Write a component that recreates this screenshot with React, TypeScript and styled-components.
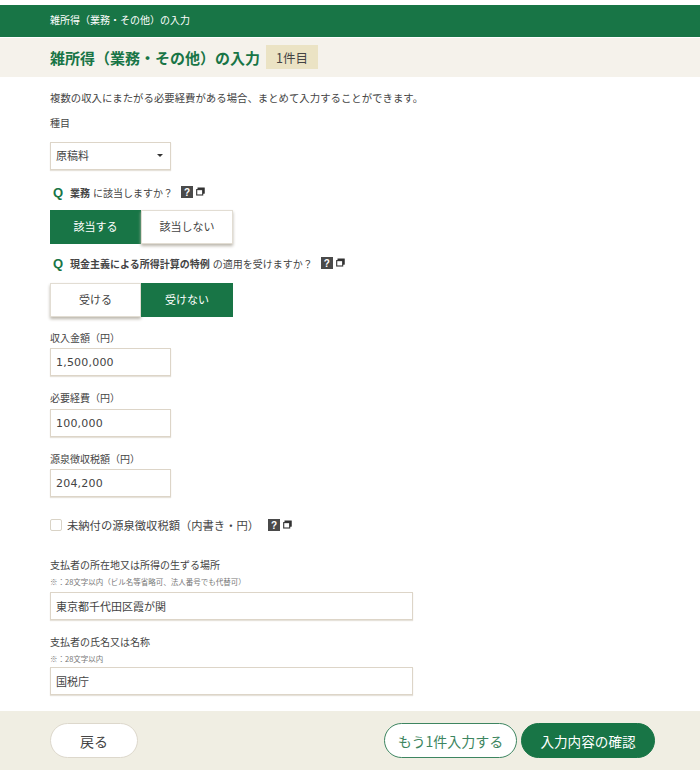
import React from "react";
import styled, { createGlobalStyle } from "styled-components";

const Global = createGlobalStyle`
  html, body { margin: 0; padding: 0; background: #fff; }
  body {
    font-family: "Noto Sans CJK JP", "Liberation Sans", sans-serif;
    color: #444;
    font-size: 12px;
  }
`;

const Page = styled.div`
  width: 700px;
  height: 772px;
  overflow: hidden;
  display: flex;
  flex-direction: column;
  padding-top: 5px;
  box-sizing: border-box;
`;
const TopBar = styled.header`
  background: #187546;
  color: #fff;
  height: 32px;
  box-sizing: border-box;
  display: flex;
  align-items: center;
  padding: 0 0 3px 50px;
  font-size: 10px;
  flex: none;
`;
const TitleBar = styled.div`
  background: #f5f2eb;
  height: 39px;
  margin-top: 1px;
  display: flex;
  align-items: center;
  padding: 0 0 1px 50px;
  box-sizing: border-box;
  gap: 6px;
  flex: none;
`;
const Title = styled.h1`
  margin: 0;
  font-size: 15px;
  font-weight: 700;
  color: #187546;
`;
const Count = styled.span`
  background: #ebe3c4;
  width: 52px;
  height: 24px;
  display: flex;
  align-items: center;
  justify-content: center;
  font-size: 12.5px;
  color: #444;
`;
const Main = styled.main`
  flex: 1;
  padding: 13px 50px 0;
  display: flex;
  flex-direction: column;
  align-items: flex-start;
`;
const Intro = styled.p`
  margin: 0;
  font-size: 10.4px;
  line-height: 15px;
`;
const Text = styled.p`
  margin: 10px 0 0;
  font-size: 10px;
  line-height: 15px;
`;
const SelectBox = styled.div`
  margin-top: 12px;
  width: 121px;
  height: 28px;
  box-sizing: border-box;
  border: 1px solid #ddd5c8;
  box-shadow: 0 1px 1px #e6e2da;
  display: flex;
  align-items: center;
  justify-content: space-between;
  padding: 0 7px 2px 5px;
  font-size: 11px;
`;
const Caret = styled.span`
  width: 0;
  height: 0;
  border-left: 3px solid transparent;
  border-right: 3px solid transparent;
  border-top: 3px solid #333;
`;
const Question = styled.div<{ $mt: number }>`
  margin-top: ${(p) => p.$mt}px;
  padding-left: 3px;
  display: flex;
  align-items: center;
  height: 16px;
  font-size: 10px;
`;
const QMark = styled.span`
  font-family: "Liberation Sans", sans-serif;
  font-weight: 700;
  font-size: 13px;
  color: #187546;
  width: 17px;
`;
const Strong = styled.b`
  font-weight: 700;
  margin-right: 3px;
`;
const Help = styled.span<{ $ml: number }>`
  margin-left: ${(p) => p.$ml}px;
  width: 12px;
  height: 12px;
  background: #4a4a4a;
  color: #fff;
  display: inline-flex;
  align-items: center;
  justify-content: center;
  font-family: "Liberation Sans", sans-serif;
  font-weight: 700;
  font-size: 10px;
`;
const WindowSvg = styled.svg`
  margin: -2px 0 0 3px;
`;
const WindowIcon = () => (
  <WindowSvg width="9" height="9" viewBox="0 0 9 9">
    <rect x="2" y="1" width="6.2" height="5.2" fill="#333" stroke="#333" strokeWidth="1" />
    <rect x="0.7" y="2.6" width="6" height="5.4" fill="#fff" stroke="#333" strokeWidth="1.1" />
  </WindowSvg>
);
const Toggle = styled.div<{ $mt: number }>`
  margin-top: ${(p) => p.$mt}px;
  display: grid;
  grid-template-columns: 91px 92px;
  width: 183px;
  height: 34px;
`;
const ToggleBtn = styled.div<{ $on?: boolean }>`
  display: flex;
  align-items: center;
  justify-content: center;
  font-size: 11px;
  box-sizing: border-box;
  padding-bottom: 2px;
  background: ${(p) => (p.$on ? "#187546" : "#fff")};
  color: ${(p) => (p.$on ? "#fff" : "#444")};
  ${(p) => (p.$on ? "" : "border: 1px solid #e2ddd3; box-shadow: 0 2px 3px #bbb6ac;")}
`;
const Field = styled.div<{ $mt: number }>`
  margin-top: ${(p) => p.$mt}px;
`;
const Label = styled.div`
  font-size: 10px;
  line-height: 15px;
`;
const Note = styled.div`
  font-size: 7.5px;
  line-height: 10px;
  margin-top: 5px;
  color: #777;
`;
const Input = styled.div<{ $w: number; $mt: number }>`
  margin-top: ${(p) => p.$mt}px;
  width: ${(p) => p.$w}px;
  height: 28px;
  box-sizing: border-box;
  border: 1px solid #ddd5c8;
  box-shadow: 0 1px 1px #e6e2da;
  display: flex;
  align-items: center;
  padding-left: 5px;
  font-size: 11px;
`;
const Num = styled.span`
  font-family: "DejaVu Sans", sans-serif;
  font-size: 11px;
  letter-spacing: 0.2px;
`;
const CheckRow = styled.div`
  margin-top: 20px;
  display: flex;
  align-items: center;
  height: 16px;
  font-size: 11.3px;
`;
const Check = styled.span`
  width: 12px;
  height: 12px;
  box-sizing: border-box;
  border: 1px solid #d9d3c6;
  border-radius: 2px;
  margin-right: 5px;
`;
const Footer = styled.footer`
  background: #f0eee3;
  height: 59px;
  margin-bottom: 2px;
  flex: none;
  display: flex;
  align-items: center;
  padding: 0 45px 0 50px;
`;
const Pill = styled.div<{ $w: number; $kind: "plain" | "outline" | "solid" }>`
  width: ${(p) => p.$w}px;
  height: 35px;
  border-radius: 18px;
  box-sizing: border-box;
  display: flex;
  align-items: center;
  justify-content: center;
  font-size: ${(p) => (p.$kind === "solid" ? 13.6 : 14)}px;
  background: ${(p) => (p.$kind === "solid" ? "#187546" : "#fff")};
  color: ${(p) => (p.$kind === "solid" ? "#fff" : p.$kind === "outline" ? "#3d8560" : "#444")};
  border: 1px solid ${(p) => (p.$kind === "solid" ? "#187546" : p.$kind === "outline" ? "#3d8560" : "#ddd8cc")};
`;
const Spacer = styled.div`
  flex: 1;
`;
const PillGap = styled.div`
  width: 4px;
`;

export default function App() {
  return (
    <Page>
      <Global />
      <TopBar>雑所得（業務・その他）の入力</TopBar>
      <TitleBar>
        <Title>雑所得（業務・その他）の入力</Title>
        <Count>1件目</Count>
      </TitleBar>
      <Main>
        <Intro>複数の収入にまたがる必要経費がある場合、まとめて入力することができます。</Intro>
        <Text>種目</Text>
        <SelectBox>
          原稿料
          <Caret />
        </SelectBox>
        <Question $mt={14}>
          <QMark>Q</QMark>
          <Strong>業務</Strong>に該当しますか？
          <Help $ml={8}>?</Help>
          <WindowIcon />
        </Question>
        <Toggle $mt={10}>
          <ToggleBtn $on>該当する</ToggleBtn>
          <ToggleBtn>該当しない</ToggleBtn>
        </Toggle>
        <Question $mt={11}>
          <QMark>Q</QMark>
          <Strong>現金主義による所得計算の特例</Strong>の適用を受けますか？
          <Help $ml={8}>?</Help>
          <WindowIcon />
        </Question>
        <Toggle $mt={12}>
          <ToggleBtn>受ける</ToggleBtn>
          <ToggleBtn $on>受けない</ToggleBtn>
        </Toggle>
        <Field $mt={13}>
          <Label>収入金額（円）</Label>
          <Input $w={121} $mt={3}><Num>1,500,000</Num></Input>
        </Field>
        <Field $mt={14}>
          <Label>必要経費（円）</Label>
          <Input $w={121} $mt={4}><Num>100,000</Num></Input>
        </Field>
        <Field $mt={14}>
          <Label>源泉徴収税額（円）</Label>
          <Input $w={121} $mt={3}><Num>204,200</Num></Input>
        </Field>
        <CheckRow>
          <Check />
          未納付の源泉徴収税額（内書き・円）
          <Help $ml={9}>?</Help>
          <WindowIcon />
        </CheckRow>
        <Field $mt={24}>
          <Label>支払者の所在地又は所得の生ずる場所</Label>
          <Note>※：28文字以内（ビル名等省略可、法人番号でも代替可）</Note>
          <Input $w={363} $mt={5}>東京都千代田区霞が関</Input>
        </Field>
        <Field $mt={14}>
          <Label>支払者の氏名又は名称</Label>
          <Note>※：28文字以内</Note>
          <Input $w={363} $mt={3}>国税庁</Input>
        </Field>
      </Main>
      <Footer>
        <Pill $w={88} $kind="plain">戻る</Pill>
        <Spacer />
        <Pill $w={133} $kind="outline">もう1件入力する</Pill>
        <PillGap />
        <Pill $w={134} $kind="solid">入力内容の確認</Pill>
      </Footer>
    </Page>
  );
}
